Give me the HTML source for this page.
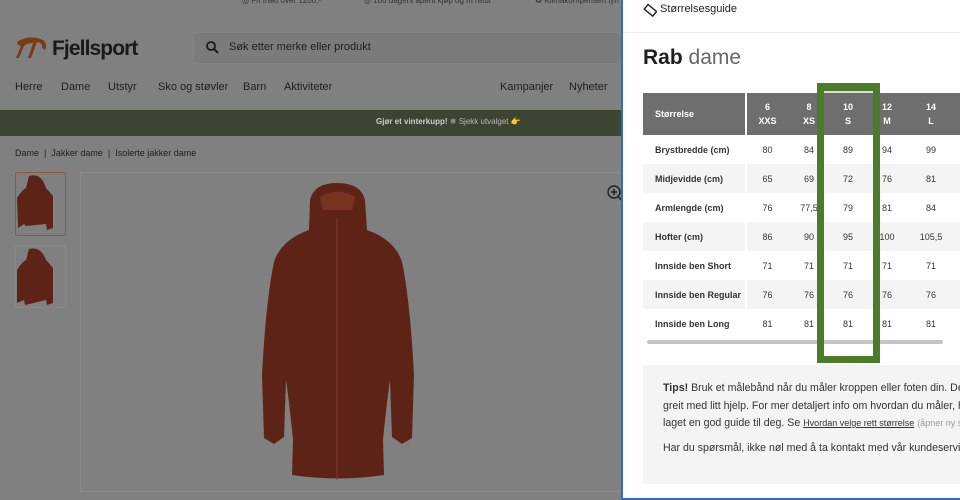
<!DOCTYPE html>
<html><head><meta charset="utf-8"><style>
*{margin:0;padding:0;box-sizing:border-box}
body{width:960px;height:500px;overflow:hidden;position:relative;background:#808080;font-family:"Liberation Sans",sans-serif;color:#222}
.a{position:absolute;white-space:nowrap}
.l{font-size:11px;color:#1e1e1e}
#panel{position:absolute;left:621px;top:0;width:339px;height:500px;background:#fff;border-left:2px solid #2f6cc0;border-bottom:2px solid #2f6cc0;overflow:hidden}
.p{position:absolute;white-space:nowrap}
table{border-collapse:collapse;position:absolute;left:20px;top:93px;font-size:9px;color:#333;table-layout:fixed;width:360px}
td,th{height:29px;text-align:center;white-space:nowrap;padding:0}
th{background:#6e6e6e;color:#fff;font-weight:bold;height:42px;line-height:14px}
td:first-child,th:first-child{text-align:left;padding-left:12px;border-right:2px solid #fff}
tr.g td{background:#f4f4f4}
td:first-child{font-weight:bold;color:#333}
</style></head><body>
<div class="a" style="top:-4px;left:242px;font-size:8px;color:#333">◎ Fri frakt over 1200,-</div>
<div class="a" style="top:-4px;left:364px;font-size:8px;color:#333">◎ 100 dagers åpent kjøp og fri retur</div>
<div class="a" style="top:-4px;left:535px;font-size:8px;color:#333">♻ Klimakompensert lyn</div>
<svg class="a" style="left:15px;top:34px" width="34" height="28" viewBox="0 0 34 28"><path d="M2 8 Q14 0 28 6 Q33 10 30 16 L27 14 Q28 9 22 8 L16 24 L13 24 L18 9 Q12 9 9 12 L4 24 L1 24 L6 12 Q3 12 2 8Z" fill="#7a3c12"/></svg>
<div class="a" style="left:52px;top:37px;font-size:21px;font-weight:bold;color:#1a1a1a;letter-spacing:-0.9px">Fjellsport</div>
<div class="a" style="left:195px;top:33px;width:426px;height:30px;background:#7b7b7b;border-radius:4px"></div>
<svg class="a" style="left:206px;top:41px" width="13" height="13"><circle cx="5" cy="5" r="4" fill="none" stroke="#1a1a1a" stroke-width="1.8"/><path d="M8 8 L12 12" stroke="#1a1a1a" stroke-width="2"/></svg>
<div class="a l" style="left:229px;top:41px">Søk etter merke eller produkt</div>
<div class="a l" style="left:15px;top:81px">Herre</div>
<div class="a l" style="left:61px;top:81px">Dame</div>
<div class="a l" style="left:108px;top:81px">Utstyr</div>
<div class="a l" style="left:158px;top:81px">Sko og støvler</div>
<div class="a l" style="left:243px;top:81px">Barn</div>
<div class="a l" style="left:284px;top:81px">Aktiviteter</div>
<div class="a l" style="left:500px;top:81px">Kampanjer</div>
<div class="a l" style="left:569px;top:81px">Nyheter</div>
<div class="a" style="left:0;top:110px;width:621px;height:26px;background:#3b4531"></div>
<div class="a" style="left:376px;top:117px;font-size:8px;color:#b8b8b8"><b style="color:#ccc">Gjør et vinterkupp!</b> ❄ Sjekk utvalget 👉</div>
<div class="a" style="left:15px;top:148px;font-size:9px;color:#1e1e1e">Dame &nbsp;| &nbsp;Jakker dame &nbsp;| &nbsp;Isolerte jakker dame</div>
<div class="a" style="left:15px;top:172px;width:51px;height:64px;border:1px solid #8a5a3a;border-radius:2px"></div>
<div class="a" style="left:15px;top:245px;width:51px;height:63px;border:1px solid #888"></div>
<div class="a" style="left:80px;top:172px;width:545px;height:320px;border:1px solid #8a8a8a"></div>
<svg class="a" style="left:0;top:0" width="621" height="500">
<g fill="#5e2317">
<path d="M29 176 Q41 172 46 188 L53 196 L53 228 L47 230 L46 224 L26 226 L24 224 L18 228 L17 198 Q22 190 26 188Z"/>
<path d="M29 249 Q41 246 46 260 L53 268 L53 303 L47 305 L46 300 L25 305 L24 300 L17 303 L17 270 Q22 262 26 260Z"/>
<path d="M310 200 Q314 183 337 183 Q361 183 365 200 L367 230 Q395 240 402 262 Q410 300 414 375 L412 438 L402 444 L392 437 L390 380 Q387 400 383 440 L384 475 Q340 482 292 475 L293 440 Q289 400 286 380 L284 437 L274 444 L264 438 L262 375 Q266 300 274 262 Q281 240 309 230Z"/>
</g>
<path d="M320 197 Q337 186 355 197 L352 210 L323 210Z" fill="#7a3220"/>
<path d="M337 218 L337 480" stroke="#84382a" stroke-width="1"/>
<circle cx="614" cy="192" r="6" fill="none" stroke="#222" stroke-width="1.5"/><path d="M611 192h6M614 189v6M618 196l3 4" stroke="#222" stroke-width="1.5"/>
</svg>
<div id="panel">
<svg class="p" style="left:20px;top:3px" width="14" height="14"><rect x="2" y="4" width="11" height="6" transform="rotate(40 7 7)" fill="none" stroke="#222" stroke-width="1.4"/></svg>
<div class="p" style="left:37px;top:3px;font-size:11px;color:#222">Størrelsesguide</div>
<div class="p" style="left:0;top:32px;width:339px;height:1px;background:#eee"></div>
<div class="p" style="left:20px;top:46px;font-size:21px"><b style="color:#1e1e1e">Rab</b> <span style="color:#666">dame</span></div>
<table>
<colgroup><col style="width:103px"><col style="width:42px"><col style="width:42px"><col style="width:36px"><col style="width:42px"><col style="width:46px"><col style="width:49px"></colgroup>
<tr><th>Størrelse</th><th>6<br>XXS</th><th>8<br>XS</th><th>10<br>S</th><th>12<br>M</th><th>14<br>L</th><th>16<br>XL</th></tr>
<tr><td>Brystbredde (cm)</td><td>80</td><td>84</td><td>89</td><td>94</td><td>99</td><td></td></tr>
<tr class="g"><td>Midjevidde (cm)</td><td>65</td><td>69</td><td>72</td><td>76</td><td>81</td><td></td></tr>
<tr><td>Armlengde (cm)</td><td>76</td><td>77,5</td><td>79</td><td>81</td><td>84</td><td></td></tr>
<tr class="g"><td>Hofter (cm)</td><td>86</td><td>90</td><td>95</td><td>100</td><td>105,5</td><td></td></tr>
<tr><td>Innside ben Short</td><td>71</td><td>71</td><td>71</td><td>71</td><td>71</td><td></td></tr>
<tr class="g"><td>Innside ben Regular</td><td>76</td><td>76</td><td>76</td><td>76</td><td>76</td><td></td></tr>
<tr><td>Innside ben Long</td><td>81</td><td>81</td><td>81</td><td>81</td><td>81</td><td></td></tr>
</table>
<div class="p" style="left:24px;top:340px;width:296px;height:4px;background:#c4c4c4;border-radius:2px"></div>
<div class="p" style="left:194px;top:83px;width:63px;height:280px;border:7px solid #4b7c2a;border-top-width:8px"></div>
<div class="p" style="left:201px;top:91px;width:49px;height:2px;background:#ddd"></div>
<div class="p" style="left:20px;top:365px;width:330px;height:119px;background:#f4f4f4"></div>
<div class="p" style="left:40px;top:380px;font-size:10.6px;color:#333;line-height:17.5px">
<b>Tips!</b> Bruk et målebånd når du måler kroppen eller foten din. Det er<br>greit med litt hjelp. For mer detaljert info om hvordan du måler, har vi<br>laget en god guide til deg. Se <u style="font-size:9px">Hvordan velge rett størrelse</u> <span style="font-size:9px;color:#999">(åpner ny side)</span></div>
<div class="p" style="left:40px;top:442px;font-size:10.6px;color:#333">Har du spørsmål, ikke nøl med å ta kontakt med vår kundeservice.</div>
</div>
</body></html>
